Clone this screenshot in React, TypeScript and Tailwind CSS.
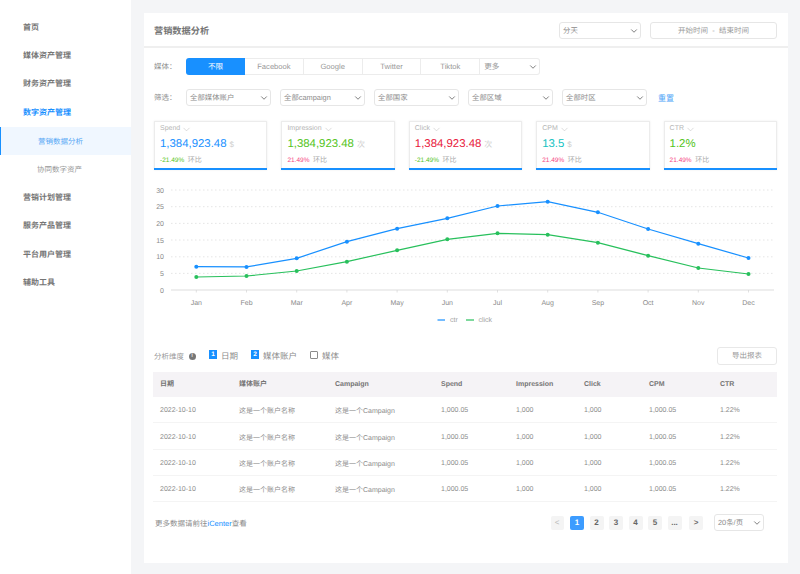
import { ChevronDown } from 'lucide-react';

const FONT = '[font-family:"Liberation_Sans","Noto_Sans_CJK_SC",sans-serif] [text-rendering:geometricPrecision]';

const NAV = [
  { label: '首页' },
  { label: '媒体资产管理' },
  { label: '财务资产管理' },
  { label: '数字资产管理', open: true },
  { label: '营销数据分析', sub: true, active: true },
  { label: '协同数字资产', sub: true },
  { label: '营销计划管理' },
  { label: '服务产品管理' },
  { label: '平台用户管理' },
  { label: '辅助工具' },
];

const KPIS = [
  { name: 'Spend', value: '1,384,923.48', unit: '$', color: 'text-[#1890ff]', change: '-21.49%', up: false },
  { name: 'Impression', value: '1,384,923.48', unit: '次', color: 'text-[#52c41a]', change: '21.49%', up: true },
  { name: 'Click', value: '1,384,923.48', unit: '次', color: 'text-[#e8173a]', change: '-21.49%', up: false },
  { name: 'CPM', value: '13.5', unit: '$', color: 'text-[#13c2c2]', change: '21.49%', up: true },
  { name: 'CTR', value: '1.2%', unit: '', color: 'text-[#52c41a]', change: '21.49%', up: true },
];

const MONTHS = ['Jan', 'Feb', 'Mar', 'Apr', 'May', 'Jun', 'Jul', 'Aug', 'Sep', 'Oct', 'Nov', 'Dec'];
const CTR_Y = [266.7, 266.9, 258.3, 241.7, 228.7, 218.3, 206, 201.7, 212.3, 229, 243.7, 258];
const CLICK_Y = [277, 276, 271, 261.7, 250.3, 239.3, 233.3, 234.7, 242.7, 255.7, 268, 274];
const monthX = (i: number) => 196.3 + i * 50.2;

const COLS = ['日期', '媒体账户', 'Campaign', 'Spend', 'Impression', 'Click', 'CPM', 'CTR'];
const ROW = ['2022-10-10', '这是一个账户名称', '这是一个Campaign', '1,000.05', '1,000', '1,000', '1,000.05', '1.22%'];
const GRID = 'grid grid-cols-[79px_96px_106px_75px_68px_65px_71px_57px] pl-[7px]';

function Select({ label, width }: { label: string; width: string }) {
  return (
    <div className={`${width} h-[17px] flex items-center justify-between pl-[3px] pr-[1px] border border-[#e6e6e6] rounded-[3px] bg-white text-[7.4px] text-[#8c8c8c]`}>
      <span>{label}</span>
      <ChevronDown size={10} strokeWidth={2} className="text-[#666]" />
    </div>
  );
}

function Kpi({ kpi }: { kpi: (typeof KPIS)[number] }) {
  return (
    <div className="h-[49px] flex flex-col border border-[#ececec] border-b-0 shadow-[0_0_2px_rgba(0,0,0,0.08)] bg-white">
      <div className="flex items-center gap-[1px] pl-[5px] pt-[2px] h-[12px] text-[7px] text-[#b5b5b5]">
        {kpi.name}
        <ChevronDown size={11} strokeWidth={1} />
      </div>
      <div className="flex items-baseline gap-[3px] pl-[5px] mt-[2px] h-[15px]">
        <span className={`text-[11.4px] ${kpi.color}`}>{kpi.value}</span>
        <span className="text-[8px] text-[#cfcfcf]">{kpi.unit}</span>
      </div>
      <div className="flex items-center gap-[3.5px] pl-[5px] mt-[4px] h-[12px] text-[6.5px]">
        <span className={kpi.up ? 'text-[#f5447f]' : 'text-[#52c41a]'}>{kpi.change}</span>
        <span className="text-[7px] text-[#a8a8a8]">环比</span>
      </div>
      <div className="mt-auto h-[2px] -mx-px bg-[#1890ff]" />
    </div>
  );
}

function Chart() {
  const line = (ys: number[]) => ys.map((y, i) => `${monthX(i)},${y}`).join(' ');
  return (
    <svg viewBox="154 180 623 150" width={623} height={150} className="block">
      {[190, 206.7, 223.4, 240, 256.8, 273.4].map((y) => (
        <line key={y} x1={171} x2={774} y1={y} y2={y} stroke="#dedede" strokeWidth={0.8} strokeDasharray="1.5 2.5" />
      ))}
      <line x1={171} x2={774} y1={290} y2={290} stroke="#d4d4d4" strokeWidth={0.8} />
      {[30, 25, 20, 15, 10, 5, 0].map((v, i) => (
        <text key={v} x={164} y={192.6 + i * 16.68} textAnchor="end" fontSize={7} fill="#8a8a8a">{v}</text>
      ))}
      {MONTHS.map((m, i) => (
        <g key={m}>
          <line x1={monthX(i)} x2={monthX(i)} y1={290} y2={292.5} stroke="#d4d4d4" strokeWidth={0.7} />
          <text x={monthX(i)} y={304.5} textAnchor="middle" fontSize={7} fill="#8a8a8a">{m}</text>
        </g>
      ))}
      <polyline points={line(CTR_Y)} fill="none" stroke="#1890ff" strokeWidth={1.2} />
      <polyline points={line(CLICK_Y)} fill="none" stroke="#28c05c" strokeWidth={1.2} />
      {CTR_Y.map((y, i) => <circle key={i} cx={monthX(i)} cy={y} r={2} fill="#1890ff" />)}
      {CLICK_Y.map((y, i) => <circle key={i} cx={monthX(i)} cy={y} r={2} fill="#28c05c" />)}
      <line x1={437.5} x2={445} y1={320} y2={320} stroke="#1890ff" strokeWidth={1.2} />
      <text x={450} y={322.4} fontSize={7} fill="#a3a3a3">ctr</text>
      <line x1={466} x2={474} y1={320} y2={320} stroke="#28c05c" strokeWidth={1.2} />
      <text x={478.5} y={322.4} fontSize={7} fill="#a3a3a3">click</text>
    </svg>
  );
}

function Dim({ num, label }: { num?: string; label: string }) {
  return (
    <div className="flex items-center gap-[4px] text-[8.5px] text-[#8c8c8c]">
      {num ? (
        <span className="w-[8px] h-[9px] -mt-[3px] pt-[1px] flex items-center justify-center bg-[#1890ff] text-white text-[6.5px] leading-none font-bold">{num}</span>
      ) : (
        <span className="w-[8px] h-[8px] -mt-[2px] border border-[#8c8c8c] rounded-[1px]" />
      )}
      <span className="pt-[1px]">{label}</span>
    </div>
  );
}

export default function App() {
  return (
    <div className={`${FONT} flex w-[800px] h-[574px] overflow-hidden bg-[#f4f5f7]`}>
      {/* Sidebar */}
      <aside className="w-[131px] shrink-0 bg-white pt-[13.5px]">
        {NAV.map((n) => (
          <div
            key={n.label}
            className={
              n.sub
                ? `h-[28.4px] flex items-center pl-[37px] text-[7.5px] ${n.active ? 'bg-[#f0f7ff] text-[#5aa9f5] border-l border-[#1890ff] pl-[36px]' : 'text-[#999]'}`
                : `h-[28.4px] flex items-center pl-[23px] text-[8px] font-bold ${n.open ? 'text-[#1890ff]' : 'text-[#757575]'}`
            }
          >
            {n.label}
          </div>
        ))}
      </aside>

      {/* Main */}
      <main className="flex-1 min-w-0 pt-[13px] pl-[13px] pr-[12px] pb-[11px]">
        <div className="h-full bg-white">
          <div className="h-[35px] flex items-center justify-between pl-[10px] pr-[11px] border-b-2 border-[#efefef]">
            <h1 className="mt-[4px] text-[9.2px] font-bold text-[#757575]">营销数据分析</h1>
            <div className="flex items-center gap-[9px] mt-[2px]">
              <Select label="分天" width="w-[82px]" />
              <div className="w-[127px] h-[17px] flex items-center justify-center border border-[#e6e6e6] rounded-[3px] text-[7.5px] text-[#999]">
                开始时间&nbsp; - &nbsp;结束时间
              </div>
            </div>
          </div>

          <div className="pl-[10px] pr-[11px]">
            {/* Media tabs */}
            <div className="flex items-center mt-[10px] h-[17px]">
              <span className="w-[32px] pt-[1px] text-[7.5px] text-[#8c8c8c]">媒体：</span>
              <div className="flex h-[17px] text-[7.6px] text-[#999]">
                <div className="w-[59px] flex items-center justify-center bg-[#1890ff] text-white rounded-l-[3px]">不限</div>
                {['Facebook', 'Google', 'Twitter', 'Tiktok'].map((t) => (
                  <div key={t} className="w-[58.8px] flex items-center justify-center border border-l-0 border-[#ececec]">{t}</div>
                ))}
                <div className="w-[60px] flex items-center justify-between pl-[4px] pr-[1px] border border-l-0 border-[#ececec] rounded-r-[3px]">
                  更多
                  <ChevronDown size={10} strokeWidth={2} className="text-[#666]" />
                </div>
              </div>
            </div>

            {/* Filters */}
            <div className="flex items-center mt-[14px] h-[17px]">
              <span className="w-[32px] pt-[1px] text-[7.5px] text-[#8c8c8c]">筛选：</span>
              <div className="flex gap-[9px]">
                {['全部媒体账户', '全部campaign', '全部国家', '全部区域', '全部时区'].map((f) => (
                  <Select key={f} label={f} width="w-[85px]" />
                ))}
              </div>
              <span className="ml-[11px] pt-[2px] text-[8px] text-[#4ea5f7]">重置</span>
            </div>

            {/* KPI */}
            <div className="grid grid-cols-5 gap-[14px] mt-[15px]">
              {KPIS.map((k) => <Kpi key={k.name} kpi={k} />)}
            </div>

            <div className="mt-[10px]">
              <Chart />
            </div>

            {/* Analysis dimension */}
            <div className="flex items-center mt-[17px] h-[18px]">
              <span className="pt-[1px] text-[7.5px] text-[#999]">分析维度</span>
              <span className="ml-[4.5px] w-[7px] h-[7px] flex items-center justify-center rounded-full bg-[#777] text-white text-[5px] leading-none font-bold">!</span>
              <div className="flex items-center gap-[13px] ml-[13.5px]">
                <Dim num="1" label="日期" />
                <Dim num="2" label="媒体账户" />
                <Dim label="媒体" />
              </div>
              <div className="ml-auto w-[60px] h-[18px] flex items-center justify-center border border-[#e8e8e8] rounded-[3px] text-[7.5px] text-[#999]">导出报表</div>
            </div>

            {/* Table */}
            <div className="mt-[7px] -ml-px">
              <div className={`${GRID} h-[25px] items-center bg-[#f5f3f6] text-[7px] font-bold text-[#757575]`}>
                {COLS.map((c) => <span key={c} className="mt-[2px]">{c}</span>)}
              </div>
              {[26, 27, 26, 26].map((h, r) => (
                <div key={r} className={`${GRID} items-center border-b border-[#f4f4f4] text-[7px] text-[#8c8c8c] ${h === 27 ? 'h-[27px]' : 'h-[26px]'}`}>
                  {ROW.map((c, i) => <span key={i} className={i === 1 || i === 2 ? 'mt-[6px]' : 'mt-[4px]'}>{c}</span>)}
                </div>
              ))}
            </div>

            {/* Footer */}
            <div className="flex items-center mt-[12px] h-[17px]">
              <span className="pl-[1px] pt-[2px] text-[7.5px] text-[#8c8c8c]">
                更多数据请前往<span className="text-[#1890ff]">iCenter</span>查看
              </span>
              <div className="ml-auto flex items-center gap-[5.5px] text-[8px] font-bold text-[#666]">
                <span className="w-[13px] h-[14px] flex items-center justify-center rounded-[2px] bg-[#f4f4f4] text-[#bbb] font-normal">&lt;</span>
                <span className="w-[14px] h-[14px] ml-[1px] flex items-center justify-center rounded-[2px] bg-[#3c9cff] text-white">1</span>
                {['2', '3', '4', '5', '...'].map((p) => (
                  <span key={p} className="w-[14px] h-[14px] flex items-center justify-center rounded-[2px] bg-[#f4f4f4]">{p}</span>
                ))}
                <span className="w-[14px] h-[14px] ml-[2px] flex items-center justify-center rounded-[2px] bg-[#f4f4f4]">&gt;</span>
              </div>
              <div className="ml-[11px] mr-[13px]">
                <Select label="20条/页" width="w-[50px]" />
              </div>
            </div>
          </div>
        </div>
      </main>
    </div>
  );
}
